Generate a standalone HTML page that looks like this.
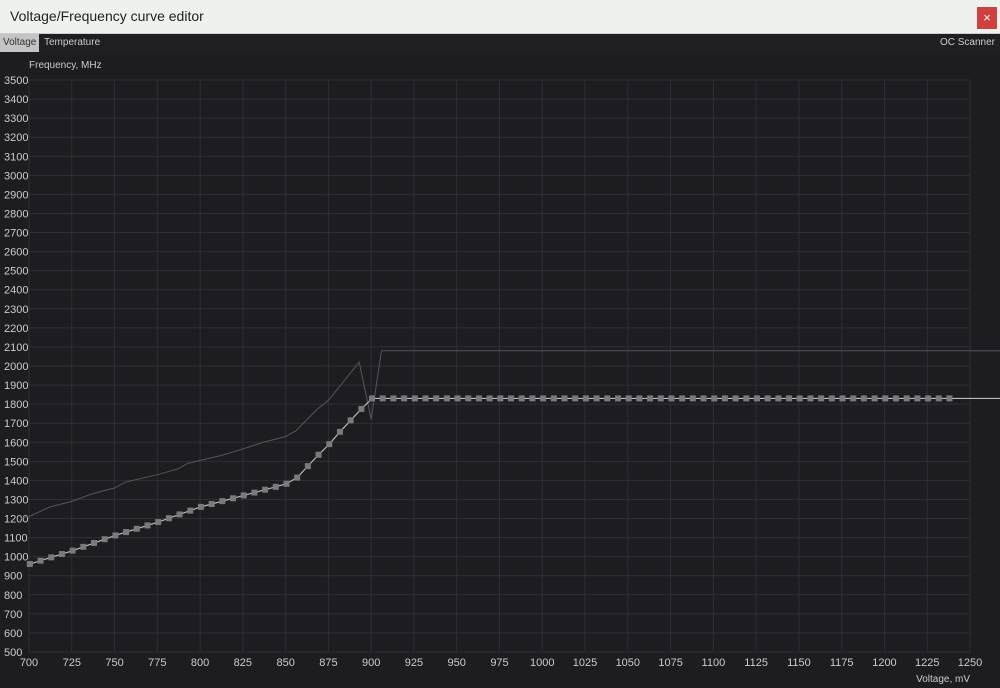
<!DOCTYPE html>
<html><head><meta charset="utf-8"><style>
html,body{margin:0;padding:0;width:1000px;height:688px;overflow:hidden;background:#1c1c21;font-family:"Liberation Sans",sans-serif}
#title{position:absolute;left:0;top:0;width:1000px;height:33px;background:#eef2ec;border-bottom:1px solid #ccc}
#title span{position:absolute;left:10px;top:8px;font-size:14px;color:#222}
#close{position:absolute;left:977px;top:7px;width:20px;height:22px;background:#d0403f;color:#fff;font-size:13px;text-align:center;line-height:22px}
#tabs{position:absolute;left:0;top:34px;width:1000px;height:18px;background:#1e1e23;font-size:10px;color:#ccc}
#tabs .t{position:absolute;top:0;height:18px;line-height:18px;padding:0 3px}
svg{position:absolute;left:0;top:0}
</style></head><body>
<div id="title"><span>Voltage/Frequency curve editor</span><div id="close">×</div></div>
<div id="tabs"><div class="t" style="left:0;background:#c4c4c4;color:#333">Voltage</div><div class="t" style="left:41px">Temperature</div><div class="t" style="right:2px">OC Scanner</div></div>
<svg id="s" width="1000" height="688"></svg>
<script>
var s=document.getElementById('s'),h='';
function X(v){return 29+(v-700)*941/550}
function Y(f){return 652-(f-500)*572/3000}
h+='<text x="29" y="68" fill="#ccc" font-size="10" font-family="Liberation Sans">Frequency, MHz</text>';
for(var f=500;f<=3500;f+=100){var y=Y(f);h+='<line x1="29" x2="970" y1="'+y+'" y2="'+y+'" stroke="#2e2e34"/>';h+='<text x="4" y="'+(y+4)+'" fill="#ccc" font-size="11" font-family="Liberation Sans">'+f+'</text>';}
for(var v=700;v<=1250;v+=25){var x=X(v);h+='<line x1="'+x+'" x2="'+x+'" y1="80" y2="652" stroke="#2e2e34"/>';h+='<text x="'+x+'" y="666" fill="#ccc" font-size="11" text-anchor="middle" font-family="Liberation Sans">'+v+'</text>';}
h+='<text x="970" y="682" fill="#ccc" font-size="10" text-anchor="end" font-family="Liberation Sans">Voltage, mV</text>';
var up=[[695,1200],[700,1210],[712,1260],[725,1290],[737,1330],[750,1360],[756,1390],[775,1430],[787,1460],[793,1490],[812,1530],[825,1565],[837,1600],[850,1630],[856,1660],[868,1770],[875,1820],[893,2020],[900,1720],[906,2080],[1280,2080]];
h+='<polyline fill="none" stroke="#55555a" stroke-width="1" points="'+up.map(function(p){return X(p[0])+','+Y(p[1])}).join(' ')+'"/>';
var k=[[700,960],[725,1030],[750,1110],[775,1180],[800,1260],[825,1320],[850,1380],[856.25,1410],[862.5,1470],[868.75,1530],[875,1585],[881.25,1650],[887.5,1710],[893.75,1770],[900,1830]];
function interp(v){if(v>=900)return 1830;for(var i=0;i<k.length-1;i++){if(v<=k[i+1][0]){var t=(v-k[i][0])/(k[i+1][0]-k[i][0]);return k[i][1]+t*(k[i+1][1]-k[i][1]);}}}
var pts=[];for(var v=700.5;v<=1238;v+=6.25)pts.push([v,interp(v)]);
h+='<polyline fill="none" stroke="#bbb" stroke-width="1.2" points="'+X(699)+','+Y(955)+' '+pts.map(function(p){return X(p[0])+','+Y(p[1])}).join(' ')+' '+X(1280)+','+Y(1830)+'"/>';
pts.forEach(function(p){h+='<rect x="'+(X(p[0])-3)+'" y="'+(Y(p[1])-3)+'" width="6" height="6" fill="#7a7a7e"/>';});
s.innerHTML=h;
</script>
</body></html>
